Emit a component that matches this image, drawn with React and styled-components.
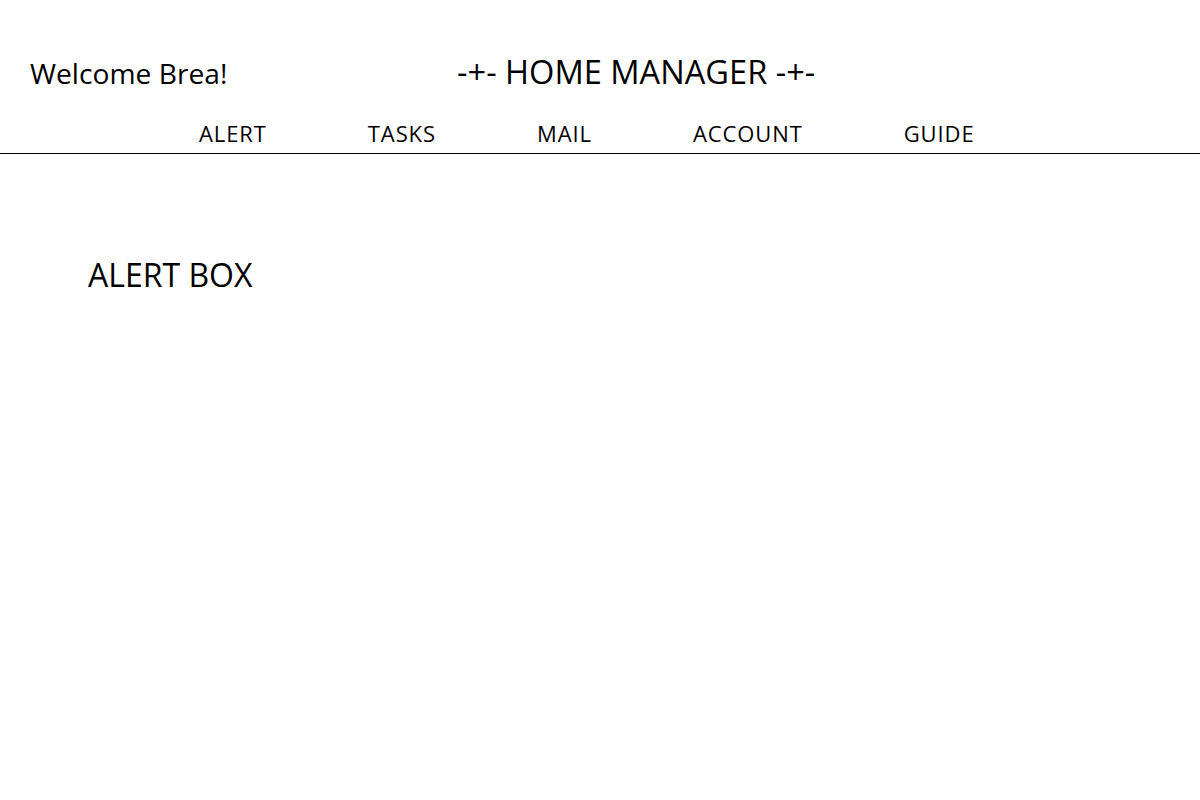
import React from "react";
import styled, { createGlobalStyle } from "styled-components";

const GlobalStyle = createGlobalStyle`
  html, body {
    margin: 0;
    padding: 0;
    background: #ffffff;
    color: #000000;
    font-family: "Open Sans", "Noto Sans", sans-serif;
  }
`;

const Page = styled.div`
  width: 1200px;
  min-height: 800px;
  background: #ffffff;
`;

const Header = styled.header`
  padding-top: 52px;
  border-bottom: 1px solid #000000;
`;

const TopRow = styled.div`
  display: flex;
  align-items: baseline;
  padding-left: 30px;
  padding-right: 155px;
`;

const Welcome = styled.div`
  font-size: 28.2px;
  line-height: 40px;
`;

const Title = styled.h1`
  flex: 1;
  margin: 0;
  text-align: center;
  font-size: 32.6px;
  font-weight: 400;
  line-height: 40px;
`;

const Nav = styled.nav`
  display: flex;
  gap: 101px;
  padding-left: 199px;
  margin-top: 25px;
  padding-bottom: 5px;
`;

const NavItem = styled.a`
  font-size: 22px;
  letter-spacing: 0.9px;
  line-height: 30px;
  color: #000000;
  text-decoration: none;
  cursor: pointer;
`;

const Main = styled.main`
  padding: 101px 0 0 88px;
`;

const BoxTitle = styled.h2`
  margin: 0;
  font-size: 32px;
  font-weight: 400;
  line-height: 40px;
`;

const links = ["ALERT", "TASKS", "MAIL", "ACCOUNT", "GUIDE"];

export default function App() {
  return (
    <Page>
      <GlobalStyle />
      <Header>
        <TopRow>
          <Welcome>Welcome Brea!</Welcome>
          <Title>-+- HOME MANAGER -+-</Title>
        </TopRow>
        <Nav>
          {links.map((l) => (
            <NavItem key={l}>{l}</NavItem>
          ))}
        </Nav>
      </Header>
      <Main>
        <BoxTitle>ALERT BOX</BoxTitle>
      </Main>
    </Page>
  );
}
